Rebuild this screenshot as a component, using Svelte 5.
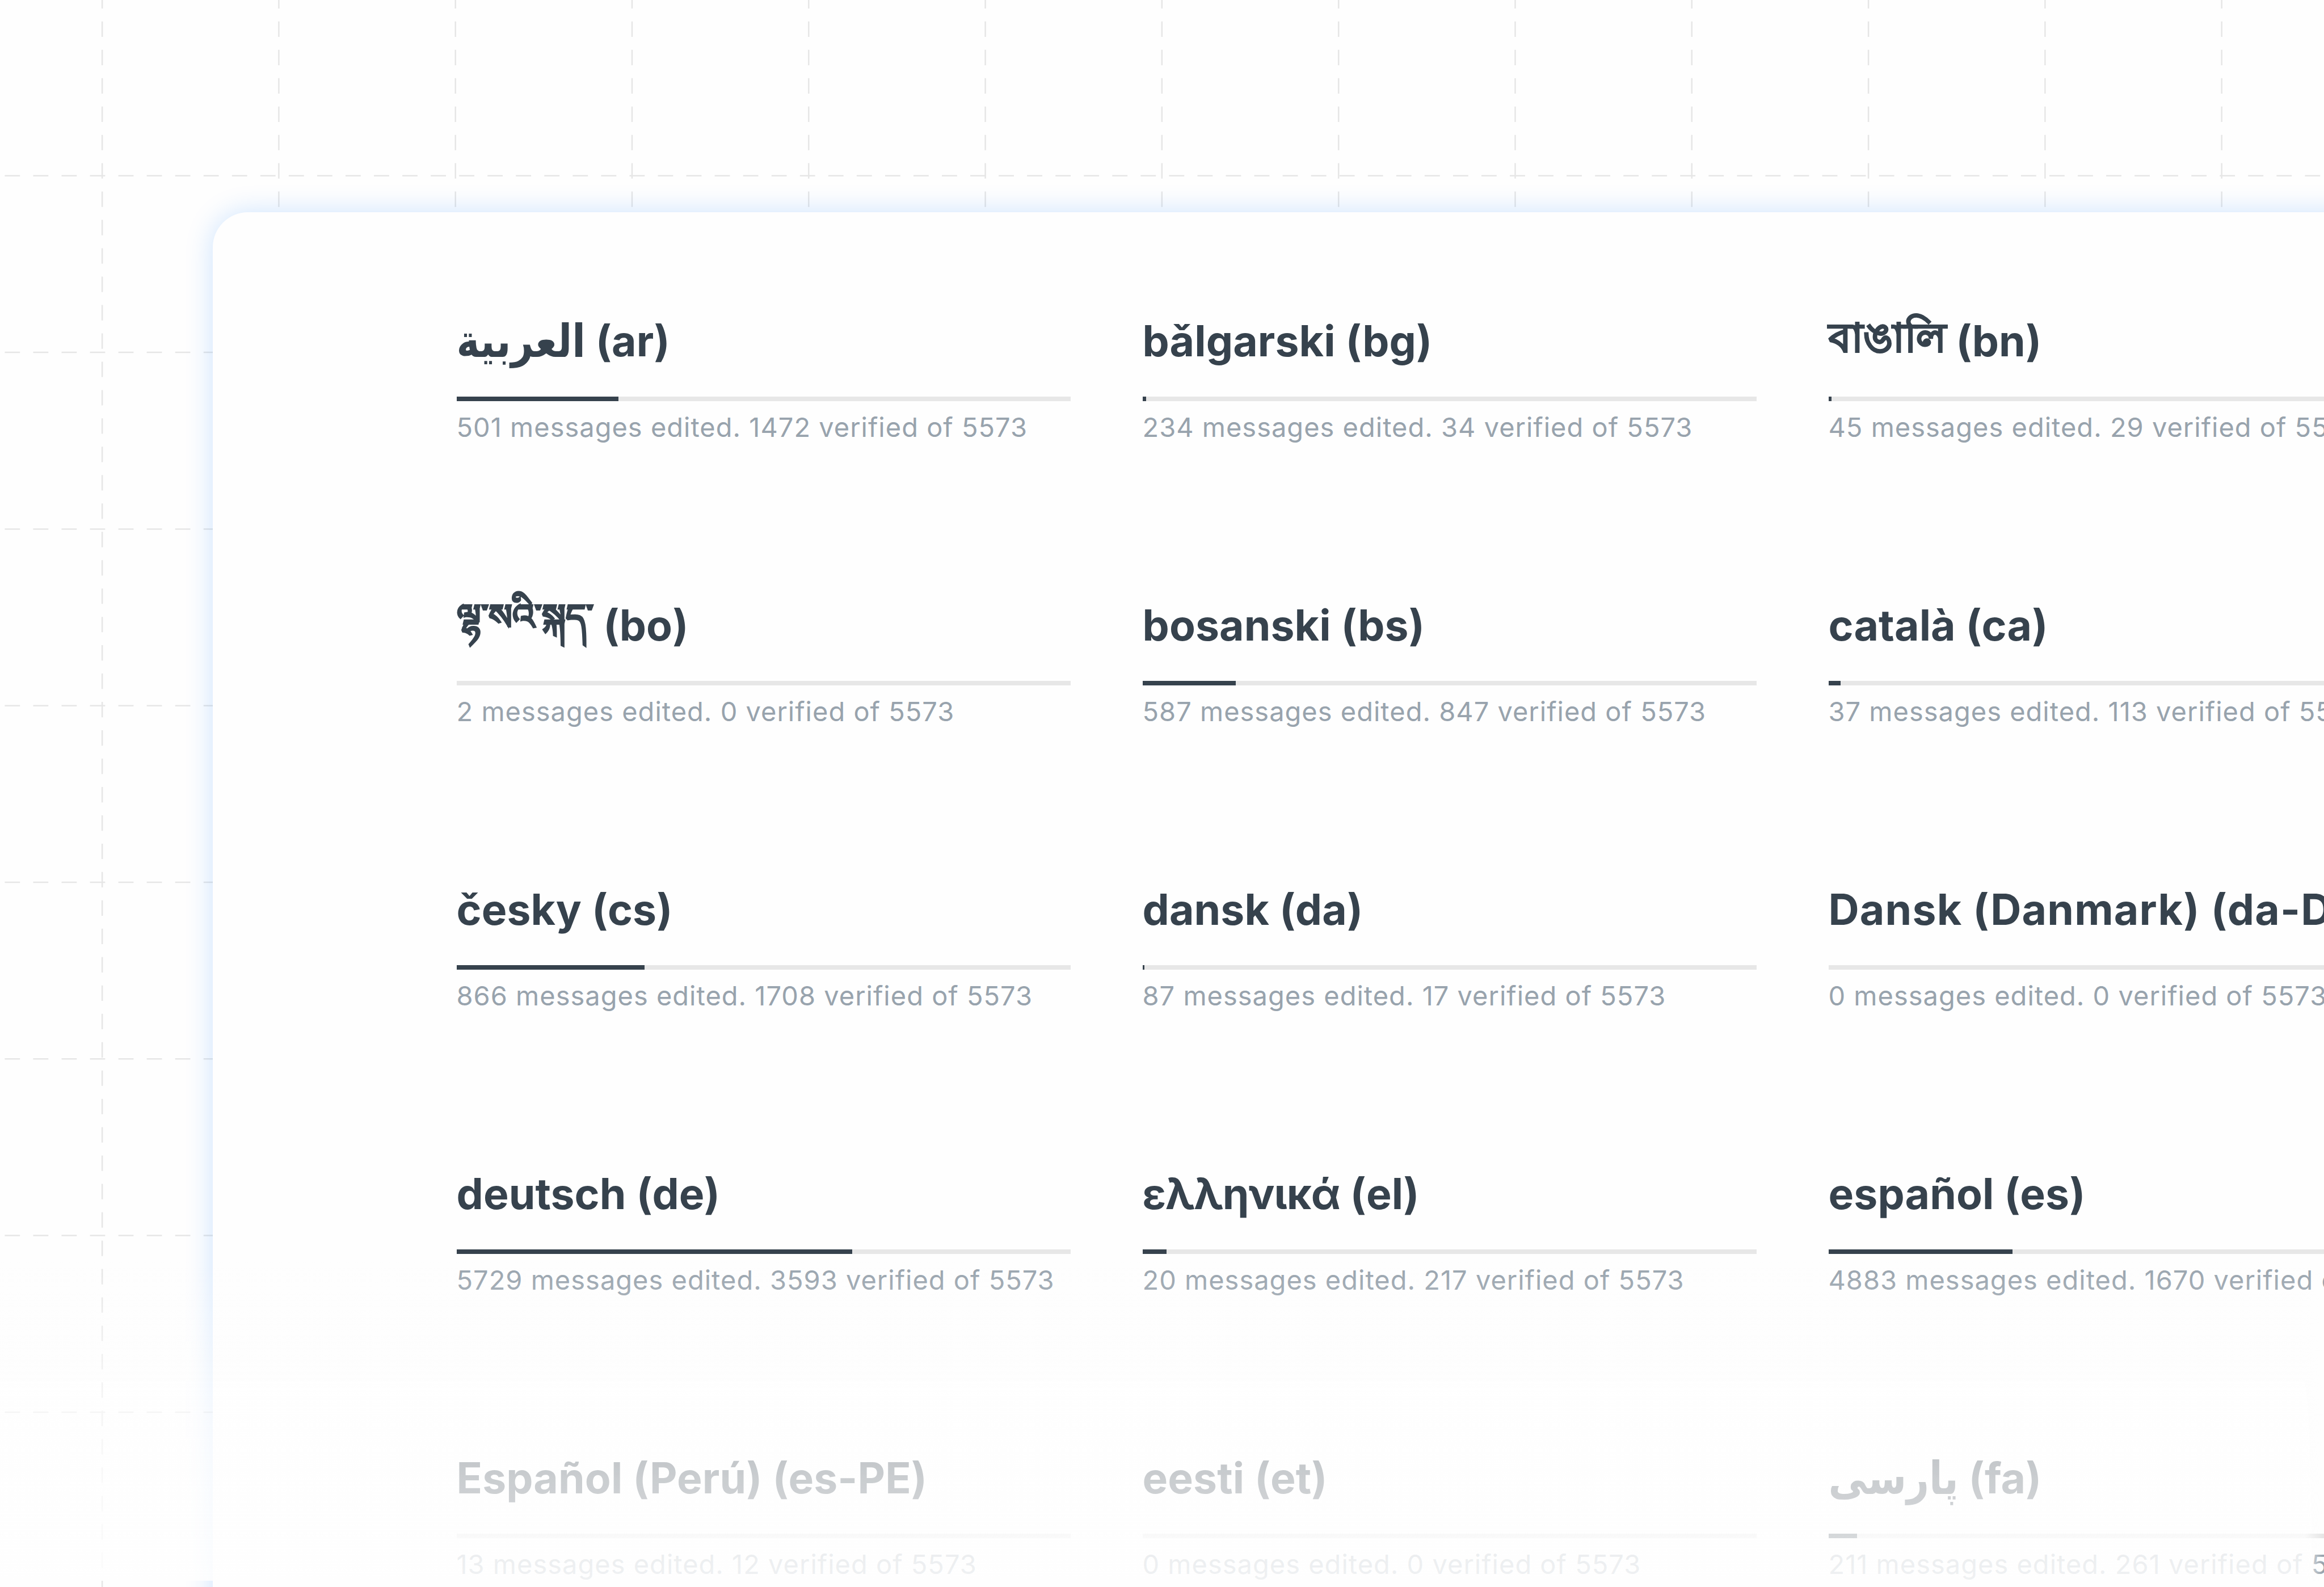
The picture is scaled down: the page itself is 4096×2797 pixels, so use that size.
<script>
const total = 5573;

const languages = [
	{ name: "العربية", code: "ar", edited: 501, verified: 1472, script: "arabic" },
	{ name: "bǎlgarski", code: "bg", edited: 234, verified: 34 },
	{ name: "বাঙালি", code: "bn", edited: 45, verified: 29, script: "bengali" },
	{ name: "ལྷ་སའི་སྐད་", code: "bo", edited: 2, verified: 0, script: "tibetan" },
	{ name: "bosanski", code: "bs", edited: 587, verified: 847 },
	{ name: "català", code: "ca", edited: 37, verified: 113 },
	{ name: "česky", code: "cs", edited: 866, verified: 1708 },
	{ name: "dansk", code: "da", edited: 87, verified: 17 },
	{ name: "Dansk (Danmark)", code: "da-DK", edited: 0, verified: 0 },
	{ name: "deutsch", code: "de", edited: 5729, verified: 3593 },
	{ name: "ελληνικά", code: "el", edited: 20, verified: 217, script: "greek" },
	{ name: "español", code: "es", edited: 4883, verified: 1670 },
	{ name: "Español (Perú)", code: "es-PE", edited: 13, verified: 12 },
	{ name: "eesti", code: "et", edited: 0, verified: 0 },
	{ name: "پارسی", code: "fa", edited: 211, verified: 261, script: "arabic" }
];

function percentDone(verified) {
	let percent = verified / total * 100;
	return percent < 0.25 ? 0 : percent;
}

const step = 311.3;
const columns = Array.from({ length: 13 }, (_, i) => 180.1 + i * step);
const rows = Array.from({ length: 8 }, (_, i) => 309.8 + i * step);
</script>

<div class="page">
	<svg class="backdrop" viewBox="0 0 4096 2797">
		{#each columns as x}
			<line class="vertical" x1={x} y1="-12.2" x2={x} y2="2797" />
		{/each}
		{#each rows as y}
			<line class="horizontal" x1="8.4" y1={y} x2="4096" y2={y} />
		{/each}
	</svg>

	<main class="card">
		{#each languages as lang}
			<section class="language">
				<h2 class:long={lang.code === "da-DK"}><bdi class={lang.script}>{lang.name}</bdi> ({lang.code})</h2>
				<div class="progress">
					<div class="done" style="width: {percentDone(lang.verified)}%"></div>
				</div>
				<p>{lang.edited} messages edited. {lang.verified} verified of {total}</p>
			</section>
		{/each}
	</main>

	<div class="fade"></div>
</div>

<style>
:global(body) {
	background: #fefefe;
}

.page {
	position: relative;
	width: 4096px;
	height: 2797px;
	overflow: hidden;
	padding: 374px 0 0 375px;
	box-sizing: border-box;
	background: #fefefe;
}

.backdrop {
	position: absolute;
	top: 0; left: 0;
	width: 4096px;
	height: 2797px;
}

line {
	stroke: #e6e6e6;
	stroke-width: 2.5;
}

.vertical {
	stroke-dasharray: 27.2 22.77;
}

.horizontal {
	stroke-dasharray: 26.8 23.25;
}

.card {
	position: relative;
	display: grid;
	grid-template-columns: repeat(3, 1082px);
	grid-auto-rows: 501.1px;
	column-gap: 127px;
	width: 4400px;
	height: 3000px;
	box-sizing: border-box;
	padding: 160px 0 0 429.5px;
	border-radius: 62px;
	background: #fefefe;
	box-shadow: 0 0 50px rgba(0, 122, 255, 0.2);
}

h2 {
	margin: 0;
	height: 164.5px;
	font: 700 75px/134px Inter, "Noto Sans", "DejaVu Sans", sans-serif;
	letter-spacing: 0.1px;
	color: #36424d;
	white-space: nowrap;
}

h2.long {
	letter-spacing: 1.2px;
}

bdi {
	line-height: 1;
}

.greek {
	letter-spacing: -1px;
}

.arabic {
	display: inline-block;
	font-size: 69px;
	letter-spacing: 0;
	transform: scaleY(1.16);
	transform-origin: 0 80%;
}

.bengali {
	font-size: 71px;
	letter-spacing: 0;
	vertical-align: 8px;
	-webkit-text-stroke: 2px #36424d;
}

.tibetan {
	font-size: 62px;
	letter-spacing: 0;
	vertical-align: 20px;
	-webkit-text-stroke: 2px #36424d;
}

.progress {
	height: 8.3px;
	background: #e7e7e7;
}

.done {
	height: 100%;
	background: #36424d;
}

p {
	margin: 11px 0 0;
	font: 400 47px/70px Inter, "Open Sans", sans-serif;
	letter-spacing: 1px;
	color: #98a3ad;
	white-space: nowrap;
}

.fade {
	position: absolute;
	left: 0;
	top: 2220px;
	width: 4096px;
	height: 566px;
	background: linear-gradient(
		rgba(254, 254, 254, 0),
		rgba(254, 254, 254, 0.5) 38%,
		rgba(254, 254, 254, 0.62) 47%,
		rgba(254, 254, 254, 0.74) 68%,
		rgba(254, 254, 254, 0.8) 86%,
		rgba(254, 254, 254, 0.86)
	);
	mask-image: linear-gradient(to right, #000 4062px, transparent 4094px);
}
</style>
